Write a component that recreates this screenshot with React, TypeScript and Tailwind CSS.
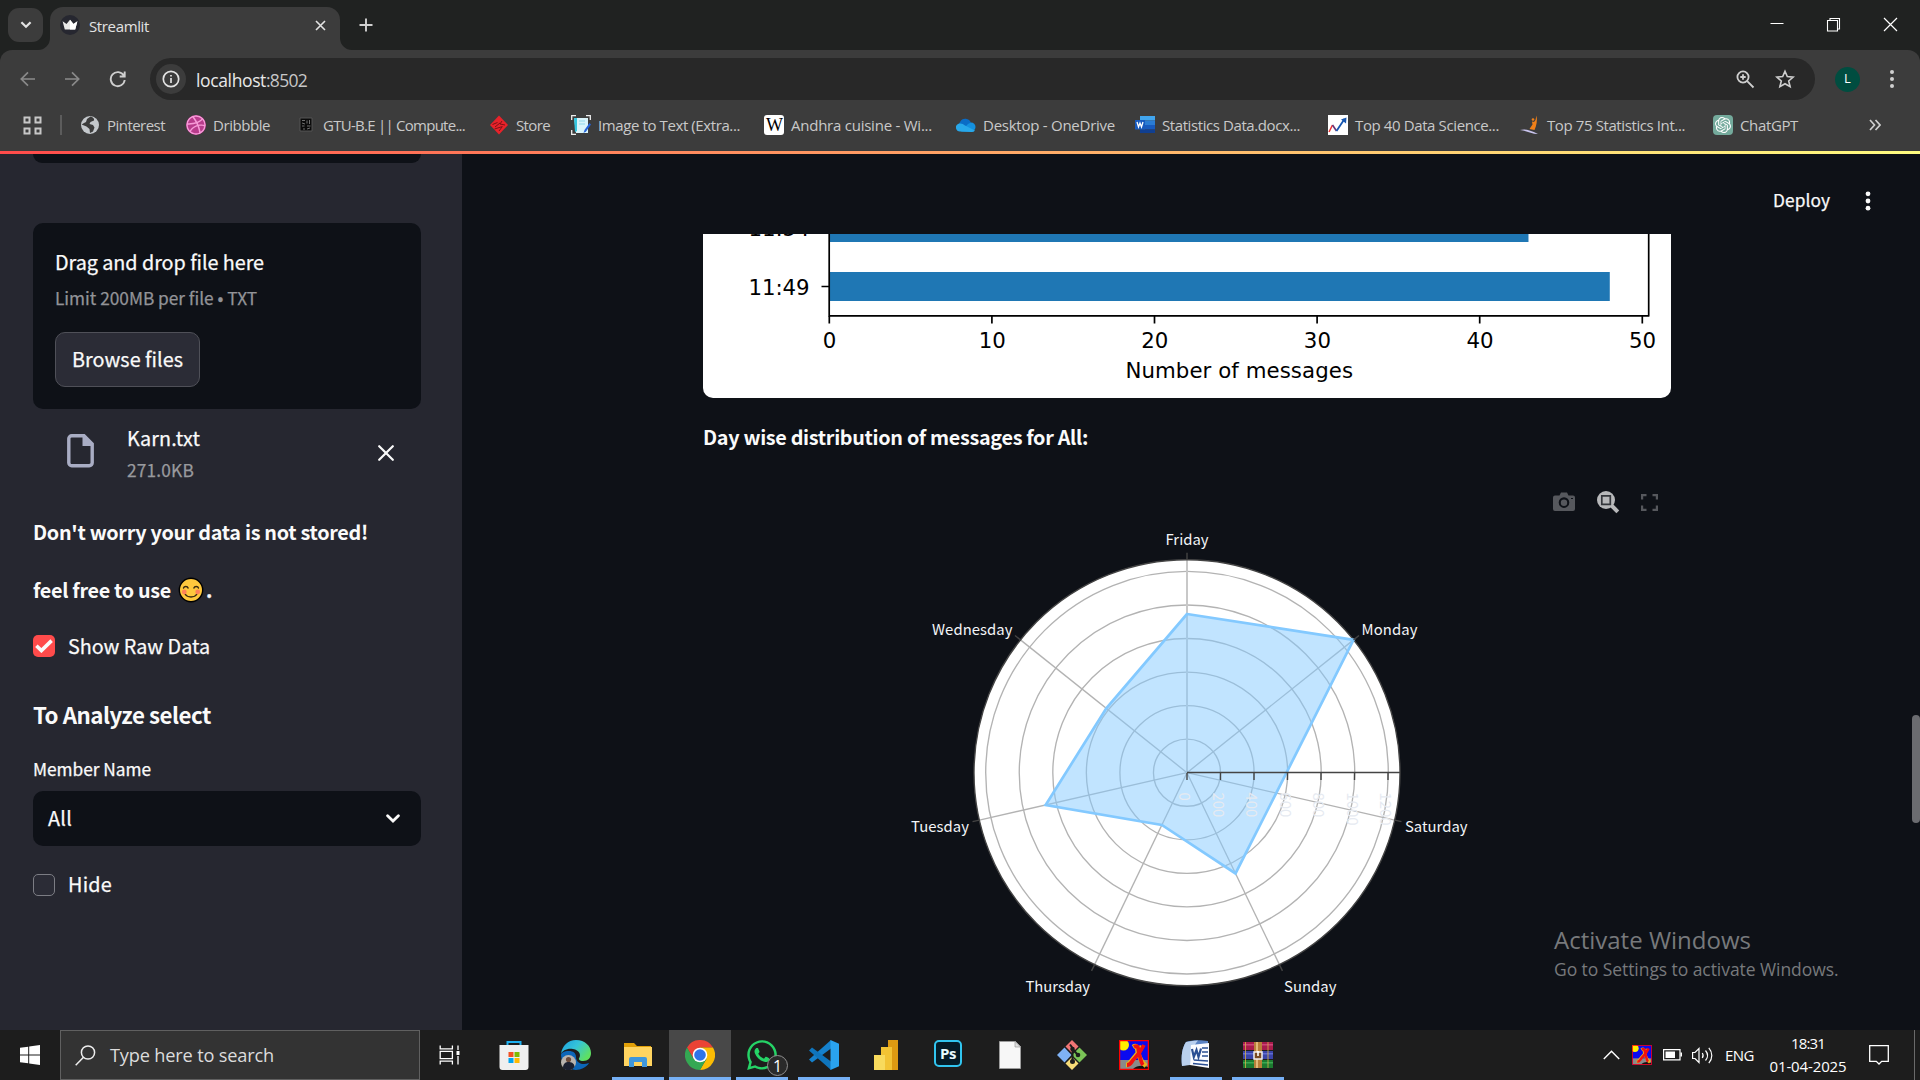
import React, { useLayoutEffect, useRef, useState } from 'react';
import { FaDribbble, FaWhatsapp } from 'react-icons/fa';
import { SiOpenai } from 'react-icons/si';

const UI = "font-['Open_Sans','Noto_Sans',sans-serif]";
const SRC = "font-['Noto_Sans_CJK_JP','Noto_Sans',sans-serif] [-webkit-text-stroke:.25px]";

/** A single line of text, tracked so that it spans exactly `w` pixels. */
function Fit({ w, className = '', children }: { w: number; className?: string; children: string }) {
  const ref = useRef<HTMLSpanElement>(null);
  const [ls, setLs] = useState(0);
  useLayoutEffect(() => {
    const el = ref.current;
    if (!el) return;
    setLs((w - el.getBoundingClientRect().width) / Math.max(1, children.length));
  }, []);
  return (
    <span ref={ref} className={'inline-block whitespace-pre ' + className} style={{ letterSpacing: ls }}>
      {children}
    </span>
  );
}

/* ---------- browser chrome ---------- */

function TabStrip() {
  return (
    <div className="flex h-[50px] items-start bg-[#202221] pl-2">
      <button className="mt-2 flex h-[34px] w-[35px] items-center justify-center rounded-[11px] bg-[#3c3c3c]">
        <svg width="12" height="8" viewBox="0 0 12 8" fill="none" stroke="#e3e3e3" strokeWidth="2.2"><path d="M1.4 1.2 6 5.8l4.600-4.600" /></svg>
      </button>
      <div className="relative mt-[7px] ml-[7px] flex h-[43px] w-[290px] items-center rounded-t-[13px] bg-[#3c3c3c]">
        <svg className="absolute -left-3 bottom-0" width="12" height="12" viewBox="0 0 12 12"><path d="M12 0v12H0A12 12 0 0 0 12 0Z" fill="#3c3c3c" /></svg>
        <svg className="absolute -right-3 bottom-0" width="12" height="12" viewBox="0 0 12 12"><path d="M0 0v12h12A12 12 0 0 1 0 0Z" fill="#3c3c3c" /></svg>
        <svg className="-mt-[7px] ml-[10px]" width="20" height="20" viewBox="0 0 20 20">
          <circle cx="10" cy="10" r="10" fill="#262730" />
          <path d="M2.600 6.200 6.500 9 10 4.800 13.500 9l3.900-2.800-2.200 8.300H4.800Z" fill="#e8e8e8" />
          <path d="M10 4.800 13.500 9l3.900-2.800-2.200 8.300H10Z" fill="#fff" />
        </svg>
        <Fit w={60} className={`${UI} -mt-[6px] ml-[9px] text-[15px] leading-5 text-[#e3e3e3]`}>Streamlit</Fit>
        <svg className="-mt-[7px] mr-[14px] ml-auto" width="11" height="11" viewBox="0 0 11 11" stroke="#e3e3e3" strokeWidth="1.600"><path d="m1 1 9 9M10 1l-9 9" /></svg>
      </div>
      <svg className="mt-[18px] ml-[19px]" width="14" height="14" viewBox="0 0 14 14" stroke="#d0d0d0" strokeWidth="1.900"><path d="M7 .5v13M.5 7h13" /></svg>
      <div className="mt-[17px] ml-auto mr-[22px] flex gap-[42px]">
        <svg width="14" height="14" viewBox="0 0 14 14" stroke="#fff" strokeWidth="1"><path d="M.5 6.500h13" /></svg>
        <svg width="15" height="15" viewBox="0 0 15 15" fill="none" stroke="#fff" strokeWidth="1.100"><path d="M1.500 3.500h10v10.500h-10zM4 3.500v-2h9.500v10.500h-2" /></svg>
        <svg width="15" height="15" viewBox="0 0 15 15" stroke="#fff" strokeWidth="1.200"><path d="m1 1 13 13M14 1 1 14" /></svg>
      </div>
    </div>
  );
}

function AddressBar() {
  return (
    <div className="flex h-[50px] items-center rounded-t-[12px] bg-[#3c3c3c] pt-2 pl-[20px]">
      <svg width="16" height="16" viewBox="0 0 16 16" fill="none" stroke="#8a8a8a" strokeWidth="1.700"><path d="M15 8H1.500M8 1.300 1.300 8 8 14.700" /></svg>
      <svg className="ml-[28px]" width="16" height="16" viewBox="0 0 16 16" fill="none" stroke="#8a8a8a" strokeWidth="1.700"><path d="M1 8h13.500M8 1.300 14.700 8 8 14.700" /></svg>
      <svg className="ml-[29px]" width="18" height="18" viewBox="0 0 18 18" fill="none" stroke="#cfcfcf" strokeWidth="1.900"><path d="M14.800 5.600A7 7 0 1 0 15.700 10M15.700 1.500v5h-5" /></svg>
      <div className="ml-[23px] flex h-[42px] w-[1665px] items-center rounded-full bg-[#282828] pl-[6px]">
        <div className="flex size-[30px] items-center justify-center rounded-full bg-[#3c3c3c]">
          <svg width="18" height="18" viewBox="0 0 18 18" fill="none" stroke="#e3e3e3" strokeWidth="1.700"><circle cx="9" cy="9" r="7.700" /><path d="M9 8v5M9 4.900v1.700" /></svg>
        </div>
        <div className={`${UI} mt-px ml-[10px] flex text-[17.500px] leading-6`}>
          <Fit w={70} className="text-[#e8e8e8]">localhost</Fit>
          <Fit w={41} className="text-[#c7c7c7]">:8502</Fit>
        </div>
        <svg className="ml-auto" width="19" height="19" viewBox="0 0 19 19" fill="none" stroke="#cfcfcf" strokeWidth="1.800"><circle cx="7" cy="7" r="5.600" /><path d="m11.200 11.200 6.300 6.300M7 4.300v5.400M4.300 7h5.400" /></svg>
        <svg className="mr-[20px] ml-[20px]" width="20" height="20" viewBox="0 0 20 20" fill="none" stroke="#cfcfcf" strokeWidth="1.600"><path d="m10 2.200 2.300 5.400 5.900.5-4.500 3.900 1.400 5.700L10 14.700l-5.100 3 1.400-5.700L1.800 8.100l5.900-.5Z" /></svg>
      </div>
      <div className={`${UI} ml-[20px] flex size-[25px] items-center justify-center rounded-full bg-[#004d40] text-[13px] text-white`}>L</div>
      <svg className="ml-[29px]" width="6" height="20" viewBox="0 0 6 20" fill="#cfcfcf"><circle cx="3" cy="3" r="2" /><circle cx="3" cy="10" r="2" /><circle cx="3" cy="17" r="2" /></svg>
    </div>
  );
}

const ChartSite = () => (
  <svg width="20" height="20" viewBox="0 0 20 20"><path fill="#fff" d="M0 0h20v20H0z" /><path d="m1 17 3.500-7" stroke="#e33" strokeWidth="1.600" /><path d="m4.500 10 4 6" stroke="#637" strokeWidth="1.600" /><path d="m8.500 16 8-12" stroke="#1656b0" strokeWidth="1.800" /><path d="m13 4.500 5.500-2-.5 6Z" fill="#1656b0" /></svg>
);

const bookmarks: { label: string; box: string; w: number; icon: React.ReactNode }[] = [
  { label: 'Pinterest', box: 'w-[106px]', w: 58, icon: (
    <svg width="20" height="20" viewBox="0 0 20 20"><circle cx="10" cy="10" r="9" fill="#c4c8cc" /><path d="M10.500 1.500c3 1 4 2 3.500 4l-3.500 1.500-1 2 3.500 1 1.500 2.500-1.500 4-3 1.500-.5-4-3-2.500L1.600 9.500 4 8l2-1 1-3Z" fill="#3c3c3c" /></svg>) },
  { label: 'Dribbble', box: 'w-[110px]', w: 57, icon: <FaDribbble size={20} className="rounded-full bg-[#b83c8c] text-[#f79ad8]" /> },
  { label: 'GTU-B.E || Compute...', box: 'w-[193px]', w: 142, icon: (
    <svg width="20" height="20" viewBox="0 0 20 20"><path d="M4 3h12v13H4z" fill="#0b0b0b" stroke="#555" /><path d="M6 5.500h3M6 8l3 1M6 11h2.500M7 14h2M11 5.500v3M13.500 5v4M11 11h3.500M11 14l3-1" stroke="#707070" strokeWidth="1" /></svg>) },
  { label: 'Store', box: 'w-[82px]', w: 34, icon: (
    <svg width="20" height="20" viewBox="0 0 20 20"><path d="m10 .5 9 9.500-9 9.500L1 10Z" fill="#e8222a" /><path d="m3.500 9.500 5-2M6 12l5-4M5.500 14l8-2.500M10 16l3-4M13 6l-2 3 5 1" stroke="#7d1116" strokeWidth="1" fill="none" /></svg>) },
  { label: 'Image to Text (Extra...', box: 'w-[193px]', w: 142, icon: (
    <svg width="20" height="20" viewBox="0 0 20 20"><path d="M.7 5V.7H5M15 .7h4.300V5M.7 15v4.300H5" stroke="#eee" strokeWidth="1.300" fill="none" /><path d="M3 3h14v15H5z" fill="#d9f4fb" /><path d="M3 3h3v13l-2 1Z" fill="#35c5de" /><path d="M8 6h6M8 9h6" stroke="#8fd9ea" /><path d="m18.500 8-5 7-1 3 2.500-1.500 5-7Z" fill="#2563d8" /></svg>) },
  { label: 'Andhra cuisine - Wi...', box: 'w-[192px]', w: 141, icon: (
    <span className="flex size-5 items-center justify-center rounded-[3px] bg-white font-['Liberation_Serif',serif] text-[18px] leading-5 tracking-[-1px] text-black">W</span>) },
  { label: 'Desktop - OneDrive', box: 'w-[179px]', w: 132, icon: (
    <svg width="20" height="20" viewBox="0 0 20 20"><path d="M5 14a5 5 0 0 1-1-7 6 6 0 0 1 11 1l-3 6Z" fill="#0a6cc6" /><path d="M15 7.500a4.500 4.500 0 0 1 0 9H5L12 9Z" fill="#1490df" /><path d="M4 16.500a4 4 0 0 1-2-7.500c3-1 5 0 7 1.500l10 5a4 4 0 0 1-4 1.500Z" fill="#28a8ea" /></svg>) },
  { label: 'Statistics Data.docx...', box: 'w-[193px]', w: 138, icon: (
    <svg width="20" height="20" viewBox="0 0 20 20"><path d="M5 1h15v4.500H5z" fill="#41a5ee" /><path d="M5 5.500h15V10H5z" fill="#2b7cd3" /><path d="M5 10h15v4.500H5z" fill="#185abd" /><path d="M5 14.500h15V18H5z" fill="#103f91" /><path d="M0 5h10v9.500H0z" fill="#185abd" /><path d="m2 7 1.500 5L5 8l1.500 4L8 7" stroke="#fff" strokeWidth="1.300" fill="none" /></svg>) },
  { label: 'Top 40 Data Science...', box: 'w-[192px]', w: 144, icon: <ChartSite /> },
  { label: 'Top 75 Statistics Int...', box: 'w-[193px]', w: 138, icon: (
    <svg width="20" height="20" viewBox="0 0 20 20"><path d="M16.500.500c1 5 0 10-2 14.500l-5-1 3-4.500L12 6.500l2 .5 1.500-2Z" fill="#f08019" /><circle cx="13" cy="4.500" r="1.300" fill="#f08019" /><path d="M0 15c5-1.500 10 0 18 4-7 0-12-3.500-18-4Z" fill="#c9c4ee" /></svg>) },
  { label: 'ChatGPT', box: 'w-[110px]', w: 58, icon: (
    <span className="flex size-5 items-center justify-center rounded-[4px] bg-[#74aa9c] text-white"><SiOpenai size={16} /></span>) },
];

function BookmarksBar() {
  return (
    <div className="flex h-[51px] items-start bg-[#3c3c3c] pt-[13px] pl-[23px]">
      <svg className="mt-[3px]" width="19" height="19" viewBox="0 0 19 19" fill="none" stroke="#c7c7c7" strokeWidth="2"><path d="M1.500 1.500h5v5h-5zM12.500 1.500h5v5h-5zM1.500 12.500h5v5h-5zM12.500 12.500h5v5h-5z" /></svg>
      <div className="mt-[2px] mr-[18px] ml-[18px] h-5 w-[2px] bg-[#5c5c5c]" />
      {bookmarks.map((b) => (
        <div key={b.label} className={'flex shrink-0 items-center gap-[7px] pt-[2px] ' + b.box}>
          <span className="flex size-5 shrink-0 items-center justify-center">{b.icon}</span>
          <Fit w={b.w} className={`${UI} text-[15px] leading-5 text-[#c9c9c9]`}>{b.label}</Fit>
        </div>
      ))}
      <svg className="mt-[6px] ml-[46px]" width="12" height="12" viewBox="0 0 12 12" fill="none" stroke="#cfcfcf" strokeWidth="1.700"><path d="m1 1 4.500 5L1 11M6.500 1 11 6l-4.500 5" /></svg>
    </div>
  );
}

/* ---------- sidebar ---------- */

function Sidebar() {
  return (
    <aside className={`${SRC} flex w-[462px] shrink-0 flex-col bg-[#262730] pr-[41px] pl-[33px] text-[#fafafa]`}>
      <div className="h-[9px] shrink-0 rounded-b-[10px] bg-[#0e1117]" />
      <div className="mt-[60px] flex h-[186px] shrink-0 flex-col items-start rounded-[10px] bg-[#0e1117] pt-[23px] pl-[22px]">
        <Fit w={209} className="text-[19.8px] leading-8">Drag and drop file here</Fit>
        <Fit w={202} className="mt-[6px] text-[17.3px] leading-7 text-[#929397]">Limit 200MB per file • TXT</Fit>
        <button className="mt-[20px] flex h-[55px] w-[145px] items-center rounded-[10px] border border-[#4f5058] bg-[#2b2c36] pl-[16px]">
          <Fit w={111} className="-mt-[2px] text-[19.8px] leading-8">Browse files</Fit>
        </button>
      </div>
      <div className="flex h-[106px] shrink-0 items-start">
        <svg className="mt-[25px] ml-[34px]" width="27" height="34" viewBox="0 0 27 34"><path d="M5 1.800h12L25.200 10v18.500a3 3 0 0 1-3 3.200H5a3 3 0 0 1-3.200-3.200V5A3 3 0 0 1 5 1.800Z" fill="none" stroke="#a9adc4" strokeWidth="3.400" /><path d="M15.500 1v11H26Z" fill="#a9adc4" /></svg>
        <div className="mt-[14px] ml-[33px] flex flex-col items-start">
          <Fit w={73} className="text-[19.8px] leading-[30px]">Karn.txt</Fit>
          <Fit w={67} className="mt-[5px] text-[17.3px] leading-6 text-[#999a9e]">271.0KB</Fit>
        </div>
        <svg className="mt-[36px] mr-[27px] ml-auto" width="16" height="16" viewBox="0 0 16 16" stroke="#fafafa" strokeWidth="2.200" strokeLinecap="round"><path d="m1.200 1.200 13.600 13.600M14.800 1.200 1.200 14.800" /></svg>
      </div>
      <div className="mt-px"><Fit w={335} className="text-[19.8px] leading-8 font-bold [-webkit-text-stroke:0]">Don't worry your data is not stored!</Fit></div>
      <div className="mt-[26px] flex h-8 items-center">
        <Fit w={138} className="text-[19.8px] leading-8 font-bold [-webkit-text-stroke:0]">feel free to use</Fit>
        <svg className="ml-[7px]" width="26" height="26" viewBox="0 0 26 26">
          <circle cx="13" cy="13" r="11.700" fill="#ffc83d" stroke="#000" strokeWidth="1.400" />
          <path d="M5.500 11c.6-2 4-2 4.600 0M15.900 11c.6-2 4-2 4.600 0M7 17c2.500 4 9.500 4 12 0" fill="none" stroke="#3a2a10" strokeWidth="1.400" strokeLinecap="round" />
          <circle cx="6.300" cy="15" r="2.400" fill="#ff8257" /><circle cx="19.700" cy="15" r="2.400" fill="#ff8257" />
        </svg>
        <span className="ml-[2px] text-[19.8px] leading-8 font-bold">.</span>
      </div>
      <div className="mt-[29px] flex h-[22px] items-center">
        <span className="flex size-[22px] items-center justify-center rounded-[5px] bg-[#ff4b4b]">
          <svg width="18" height="14" viewBox="0 0 18 14" fill="none" stroke="#fafafa" strokeWidth="3.600"><path d="m1.400 6.800 5 4.800L16.600 1.600" /></svg>
        </span>
        <Fit w={142} className="ml-[13px] text-[19.8px] leading-8">Show Raw Data</Fit>
      </div>
      <div className="mt-[40px]"><Fit w={178} className="text-[22.3px] leading-[34px] font-bold [-webkit-text-stroke:0]">To Analyze select</Fit></div>
      <div className="mt-[26px]"><Fit w={118} className="text-[17.3px] leading-6">Member Name</Fit></div>
      <div className="mt-[10px] flex h-[55px] shrink-0 items-center justify-between rounded-[10px] bg-[#0e1117] pr-[21px] pl-[15px]">
        <Fit w={24} className="-mt-px text-[19.8px] leading-8">All</Fit>
        <svg width="14" height="9" viewBox="0 0 14 9" fill="none" stroke="#fafafa" strokeWidth="2.800" strokeLinecap="round"><path d="M1.600 1.700 7 7l5.400-5.300" /></svg>
      </div>
      <div className="mt-[28px] flex h-[22px] items-center">
        <span className="size-[22px] rounded-[5px] border border-[#7c7d84] bg-[#2b2c36]" />
        <Fit w={44} className="-mt-[2px] ml-[13px] text-[19.8px] leading-8">Hide</Fit>
      </div>
    </aside>
  );
}

/* ---------- charts ---------- */

function BusyTimesChart() {
  const x = (v: number) => 829.3 + v * 16.26;
  return (
    <svg className="block rounded-b-[10px] bg-white" width="968" height="164" viewBox="703 234 968 164" fontFamily="'DejaVu Sans', sans-serif" fontSize="21.3">
      <rect x="829" y="226" width={x(43) - 829} height="16" fill="#1f77b4" />
      <rect x="829" y="272" width={x(48) - 829} height="29" fill="#1f77b4" />
      <text x="748.500" y="236" textLength="61">11:54</text>
      <text x="748.500" y="294.500" textLength="61">11:49</text>
      <g stroke="#000" strokeWidth="1.700">
        <path d="M829.200 234v82M1648.700 234v82M828.400 315.800h821M821.500 286.500h7.500" fill="none" />
        {[0, 10, 20, 30, 40, 50].map((v) => <path key={v} d={`M${x(v)} 316v7.500`} />)}
      </g>
      {[0, 10, 20, 30, 40, 50].map((v) => <text key={v} x={x(v) + 0.3} y="347.700" textAnchor="middle">{v}</text>)}
      <text x="1125.500" y="377.700" textLength="227.500">Number of messages</text>
    </svg>
  );
}

const days: { name: string; r: number; x: number; y: number; w: number }[] = [
  { name: 'Friday', r: 158.7, x: 1165.500, y: 544.700, w: 43 },
  { name: 'Monday', r: 213, x: 1361.500, y: 634.800, w: 56 },
  { name: 'Saturday', r: 91.500, x: 1405, y: 831.800, w: 62.500 },
  { name: 'Sunday', r: 111.800, x: 1284, y: 991.800, w: 52.500 },
  { name: 'Thursday', r: 58, x: 1025.500, y: 991.800, w: 64.500 },
  { name: 'Tuesday', r: 145, x: 911, y: 831.800, w: 58 },
  { name: 'Wednesday', r: 103.200, x: 932, y: 634.800, w: 80.500 },
];

function DayRadarChart() {
  const cx = 1187, cy = 772.7, R = 213;
  const at = (i: number, r: number) => {
    const a = (90 - (i * 360) / 7) * (Math.PI / 180);
    return [cx + r * Math.cos(a), cy - r * Math.sin(a)];
  };
  const seg = (i: number, r0: number, r1: number) => `M${at(i, r0).join(' ')}L${at(i, r1).join(' ')}`;
  return (
    <svg className="block" width="968" height="500" viewBox="703 520 968 500" fontFamily="'Noto Sans CJK JP', 'Noto Sans', sans-serif" fontSize="14.850">
      <circle cx={cx} cy={cy} r={R} fill="#fff" />
      <g fill="none" stroke="#b3b3b3" strokeWidth="1.350">
        {[1, 2, 3, 4, 5, 6].map((k) => <circle key={k} cx={cx} cy={cy} r={k * 33.550} />)}
        {days.map((d, i) => <path key={d.name} d={seg(i, 0, R)} stroke={i === 0 ? '#c8c8c8' : '#b3b3b3'} strokeWidth={i === 0 ? 2 : 1.350} />)}
      </g>
      <circle cx={cx} cy={cy} r={R} fill="none" stroke="#444" strokeWidth="1.375" />
      <polygon points={days.map((d, i) => at(i, d.r).join(',')).join(' ')} fill="#83c9ff" fillOpacity=".5" stroke="#83c9ff" strokeWidth="2.700" />
      <g stroke="#444" strokeWidth="1.400">
        {days.map((d, i) => <path key={d.name} d={seg(i, R, R + 7)} />)}
        <path d={`M${cx} 772.500h${R}`} />
        {[0, 1, 2, 3, 4, 5, 6].map((k) => <path key={k} d={`M${cx + k * 33.5} 773v7`} />)}
      </g>
      {days.map((d) => <text key={d.name} x={d.x} y={d.y} textLength={d.w} fill="#f3f5f8">{d.name}</text>)}
      {[0, 1, 2, 3, 4, 5, 6].map((k) => (
        <text key={k} transform={`translate(${cx - 8 + k * 33.5} 792.500) rotate(90)`} fill="#e6eaf1">{k * 200}</text>
      ))}
    </svg>
  );
}

function Main() {
  return (
    <main className={`${SRC} relative flex-1 bg-[#0e1117] text-[#fafafa]`}>
      <div className="flex h-20 items-start justify-end pt-[32px] pr-[49px]">
        <Fit w={57} className="text-[17.3px] leading-7">Deploy</Fit>
        <svg className="mt-[5px] ml-[35px]" width="6" height="20" viewBox="0 0 6 20" fill="#fafafa"><circle cx="3" cy="2.800" r="2.400" /><circle cx="3" cy="10" r="2.400" /><circle cx="3" cy="17.200" r="2.400" /></svg>
      </div>
      <div className="ml-[241px] w-[968px]">
        <BusyTimesChart />
        <div className="mt-[23px] h-8"><Fit w={385} className="text-[19.8px] leading-8 font-bold [-webkit-text-stroke:0]">Day wise distribution of messages for All:</Fit></div>
        <div className="flex h-[67px] items-start justify-end pt-[39px] pr-[13px]">
          <svg width="22" height="19" viewBox="0 0 22 19"><path fillRule="evenodd" d="M2 3.500h4.500L8 .5h6l1.500 3H20a2 2 0 0 1 2 2V17a2 2 0 0 1-2 2H2a2 2 0 0 1-2-2V5.500a2 2 0 0 1 2-2ZM11 5.300a5.300 5.300 0 1 0 0 10.600 5.300 5.300 0 0 0 0-10.600Zm0 2.200a3.200 3.200 0 1 1 0 6.400 3.200 3.200 0 0 1 0-6.400Z" fill="#56585d" /><path d="M18 6h2v1h-2z" fill="#0e1117" /></svg>
          <svg className="-mt-[1px] ml-[22px]" width="23" height="23" viewBox="0 0 23 23"><circle cx="9" cy="9" r="9" fill="#b7b8ba" /><path d="m14 14 6.800 6.800" stroke="#b7b8ba" strokeWidth="4" /><path d="M4.800 4.800h8.500v8.500H4.800z" fill="none" stroke="#33363b" strokeWidth="1.700" /></svg>
          <svg className="mt-[2px] ml-[21px]" width="17" height="17" viewBox="0 0 17 17" fill="none" stroke="#56585d" strokeWidth="2.200"><path d="M1.100 5.500V1.100h4.400M11.500 1.100h4.400v4.400M15.900 11.500v4.400h-4.400M5.500 15.900H1.100v-4.400" /></svg>
        </div>
        <DayRadarChart />
      </div>
      <div className={`${UI} absolute top-[768px] left-[1092px] flex flex-col items-start text-[#77797c] [-webkit-text-stroke:0]`}>
        <Fit w={197} className="text-[24px] leading-9">Activate Windows</Fit>
        <Fit w={284.5} className="-mt-[1px] text-[17.500px] leading-6">Go to Settings to activate Windows.</Fit>
      </div>
      <div className="absolute top-[561px] right-0 h-[108px] w-2 rounded-[4px] bg-[#6b6c70]" />
    </main>
  );
}

/* ---------- taskbar ---------- */

const RunnerIcon = ({ size }: { size: number }) => (
  <svg width={size} height={size} viewBox="0 0 30 30">
    <path d="M0 0h30v30H0z" fill="#0a0af0" /><path d="M1 20h28v9H1z" fill="#8a8a8a" /><circle cx="4.500" cy="5" r="5.500" fill="#ffee00" />
    <path d="M14 29c4-4 10-4 15-2v2Z" fill="#111" />
    <path d="M14 7c5-3 4 3 5 6s4 10 8 13M23 6c-3 7-6 10-9 13s-3 6-7 6" fill="none" stroke="#e8b21a" strokeWidth="4.600" />
    <path d="M15 7c5-3 4 3 5 6s2 10 4 12M25 5c-4 8-7 11-10 14s-3 6-7 6" fill="none" stroke="#f01010" strokeWidth="3.800" />
    <path d="M.6.600h28.800v28.800H.6z" fill="none" stroke="#ff0000" strokeWidth="1.300" />
  </svg>
);

const tasks: { id: string; open?: boolean; active?: boolean; icon: React.ReactNode }[] = [
  { id: 'store', icon: (
    <svg width="30" height="30" viewBox="0 0 30 30"><path d="M8.500 6V2h13v4" fill="none" stroke="#1fb0f0" strokeWidth="2" /><path d="M.5 5h29v22a3 3 0 0 1-3 3h-23a3 3 0 0 1-3-3Z" fill="#efefef" /><path d="M9.500 12h5v5h-5z" fill="#f25022" /><path d="M15.500 12h5v5h-5z" fill="#7fba00" /><path d="M9.500 18h5v5h-5z" fill="#00a4ef" /><path d="M15.500 18h5v5h-5z" fill="#ffb900" /></svg>) },
  { id: 'edge', icon: (
    <svg width="30" height="30" viewBox="0 0 30 30">
      <defs><linearGradient id="eg" x1="0" x2="1" y1="0" y2=".6"><stop offset="0" stopColor="#1a9fe0" /><stop offset=".5" stopColor="#35c4d9" /><stop offset="1" stopColor="#5fe060" /></linearGradient></defs>
      <path d="M0 15a15 15 0 0 0 22 13.200c3-1.400 5-3.200 6-5.200-8 3-13-1-13-6 0-4-3-6-7-6-5 0-8 2-8 4Z" fill="#0c66b8" />
      <path d="M0 14C1 6 7 0 15 0c9 0 15 6 15 13 0 5-3 8-8 8-3 0-5-1.500-3.800-3 2-3 .3-8-6.200-9C6 8 1 11 0 14Z" fill="url(#eg)" />
      <circle cx="7.500" cy="22.500" r="7.500" fill="#b9b3ae" /><path d="M2 28c0-5 3-6 5.500-6s6 1 6 5a7.500 7.500 0 0 1-11.500 1Z" fill="#1c2030" /><circle cx="7.500" cy="19.500" r="2.600" fill="#6b4a3a" />
    </svg>) },
  { id: 'explorer', open: true, icon: (
    <svg width="30" height="30" viewBox="0 0 30 30"><path d="M1 3h10l3 3h14v6H1z" fill="#e2a008" /><path d="M1 7h28v19H1z" fill="#ffd460" /><path d="M6 27v-8a2 2 0 0 1 2-2h14a2 2 0 0 1 2 2v8h-5v-5h-8v5Z" fill="#3f97dc" /></svg>) },
  { id: 'chrome', open: true, active: true, icon: (
    <svg width="30" height="30" viewBox="0 0 30 30"><path d="M2 7.500A15 15 0 0 1 28 7.500H15L8.500 18.700Z" fill="#ea4335" /><path d="M28 7.500A15 15 0 0 1 15 30L21.500 18.700 15 7.500Z" fill="#fbbc04" /><path d="M2 7.500A15 15 0 0 0 15 30l6.500-11.300h-13Z" fill="#34a853" /><circle cx="15" cy="15" r="7.300" fill="#fff" /><circle cx="15" cy="15" r="5.800" fill="#2f73e8" /></svg>) },
  { id: 'whatsapp', open: true, icon: (
    <span className="relative"><FaWhatsapp size={34} color="#25d366" /><span className={`${UI} absolute -right-[9px] -bottom-[4px] flex size-[21px] items-center justify-center rounded-full border border-[#8f8f8f] bg-[#2a2a2a] text-[16px] text-white`}>1</span></span>) },
  { id: 'vscode', open: true, icon: (
    <svg width="30" height="30" viewBox="0 0 30 30"><path d="M22 0 0 19.500l3 3L22 8.500Z" fill="#1581cc" /><path d="M22 30 0 10.500l3-3L22 21.500Z" fill="#0f75bd" /><path d="m21.500 0 8.500 3.800v22.400L21.500 30Z" fill="#2aa3ef" /></svg>) },
  { id: 'powerbi', icon: (
    <svg width="24" height="30" viewBox="0 0 24 30"><path d="M14 0h10v30H14z" fill="#dd9a12" /><path d="M7 7h11v23H7z" fill="#f2c334" /><path d="M0 15h11v15H0z" fill="#f8da5c" /></svg>) },
  { id: 'photoshop', icon: (
    <span className={`${UI} -mt-[3px] flex h-[27px] w-[28px] items-center justify-center rounded-[5px] border-2 border-[#31c5f0] bg-[#051c28] text-[15px] font-bold tracking-[-.5px] text-[#e8fbff]`}>Ps</span>) },
  { id: 'document', icon: (
    <svg width="22" height="28" viewBox="0 0 22 28"><path d="M.5.500h16l5 5v22H.5z" fill="#f7f7f7" stroke="#9c9c9c" /><path d="M16 .500v5.500h5.500Z" fill="#ddd" stroke="#999" strokeWidth=".7" /></svg>) },
  { id: 'git', icon: (
    <svg width="30" height="30" viewBox="0 0 30 30"><path d="m15 0 6.500 6.500L15 13 8.500 6.500Z" fill="#f17575" /><path d="m7.500 7.500 7 7.500-7 7.500L0 15Z" fill="#7fb2f5" /><path d="m22.500 7.500 7.500 7.500-7.500 7.500-7.500-7.500Z" fill="#7bc457" /><path d="m15 17 6.500 6.500L15 30l-6.500-6.500Z" fill="#f7dc78" /><path d="M13 4.500 15.500 8v15M15.500 9l5 5.500" stroke="#1c1c1c" strokeWidth="2" fill="none" /><circle cx="15.500" cy="9" r="2.300" fill="#1c1c1c" /><circle cx="21" cy="15" r="2.300" fill="#1c1c1c" /><circle cx="15.500" cy="21.500" r="2.500" fill="#1c1c1c" /></svg>) },
  { id: 'runner', icon: <RunnerIcon size={30} /> },
  { id: 'word', open: true, icon: (
    <svg width="30" height="30" viewBox="0 0 30 30"><path d="M5 2C10 0 20 0 27 1v22c-9-1-16 1-26 3C0 16 1 8 5 2Z" fill="#5b83c4" /><path d="M5 2c4-1 8-1.500 12-1.500C12 6 9 15 9 25l-8 1C0 16 1 8 5 2Z" fill="#b9d0ee" /><path d="m10 5 18-2v25l-19-3Z" fill="#fbfcff" /><path d="m11 9 1.800 8 2.700-7 2 7L20 8.500" fill="none" stroke="#2b4f93" strokeWidth="2.200" /><path d="M21 8h6M21 12h6M21 16h6M13 20l14 1M12 23.500l15 1.500" stroke="#2b4f93" strokeWidth="1.500" /></svg>) },
  { id: 'winrar', open: true, icon: (
    <svg width="30" height="26" viewBox="0 0 30 26"><path d="M0 0h30v8H0z" fill="#a81c4c" /><path d="M0 2h30v1.500H0z" fill="#cc4478" /><path d="M0 9h30v8H0z" fill="#3a44a8" /><path d="M0 11h30v1.500H0z" fill="#5f6cd0" /><path d="M0 18h30v8H0z" fill="#1c7a30" /><path d="M0 20h30v1.500H0z" fill="#3aa850" /><path d="M2.500 0v26M25 0v26" stroke="#d8b048" strokeWidth=".8" /><path d="M11 0h8v26h-8z" fill="#b8803a" /><path d="M13 0h2v26h-2z" fill="#e2b878" /><path d="M11 10h8v7h-8z" fill="#7a4a20" stroke="#eee" strokeWidth="1.500" /><path d="M15 9v5" stroke="#fff" strokeWidth="1.600" /></svg>) },
];

function Taskbar() {
  return (
    <footer className={`${UI} flex h-[50px] bg-[#1d1d1d] text-white`}>
      <div className="flex w-[60px] items-center justify-center">
        <svg width="20" height="20" viewBox="0 0 20 20" fill="#fff"><path d="M0 2.800 8.200 1.700v7.800H0zM9.200 1.500 20 0v9.500H9.200zM0 10.500h8.200v7.800L0 17.200zM9.200 10.500H20V20L9.200 18.500z" /></svg>
      </div>
      <div className="flex w-[360px] items-center border border-[#606060] bg-[#333] pl-[14px]">
        <svg width="21" height="21" viewBox="0 0 21 21" fill="none" stroke="#eee" strokeWidth="1.500"><circle cx="13" cy="7.500" r="6.600" /><path d="M8.500 12.300.7 20.200" /></svg>
        <Fit w={164} className="-mt-[1px] ml-[14px] text-[18.200px] leading-7 text-[#dcdcdc]">Type here to search</Fit>
      </div>
      <div className="flex w-[63px] items-center pl-[19px]">
        <svg width="22" height="20" viewBox="0 0 22 20" fill="none" stroke="#fff" strokeWidth="1.300"><path d="M1.200.5v3.300h12.200V.500M1.200 6.300h12.200v7.400H1.200zM1.200 19.500v-3.300h12.200v3.300M19 .500v4.500M19 11v8.500" /><path d="M19 6v4" strokeWidth="3" /></svg>
      </div>
      {tasks.map((t) => (
        <div key={t.id} className={'relative flex w-[62px] items-center justify-center ' + (t.active ? 'bg-[#484848]' : '')}>
          {t.icon}
          {t.open && <div className={'absolute bottom-0 h-[3px] bg-[#76b0f5] ' + (t.active ? 'inset-x-0' : 'inset-x-[5px]')} />}
        </div>
      ))}
      <div className="ml-auto flex items-center">
        <svg width="17" height="10" viewBox="0 0 17 10" fill="none" stroke="#fff" strokeWidth="1.400"><path d="M.8 9 8.500 1.200 16.200 9" /></svg>
        <span className="ml-[12px]"><RunnerIcon size={20} /></span>
        <svg className="ml-[11px]" width="19" height="12" viewBox="0 0 19 12"><path d="M.6.600h16.400v10.300H.6z" fill="none" stroke="#fff" strokeWidth="1.200" /><path d="M2.500 2.500h9.500v6.500H2.500z" fill="#fff" /><path d="M17.500 3.500h1.500v4h-1.500z" fill="#fff" /></svg>
        <svg className="ml-[10px]" width="21" height="19" viewBox="0 0 21 19" fill="none" stroke="#fff" strokeWidth="1.200"><path d="M.6 6.500H3l4-4v14l-4-4H.6zM10.300 7c1 1.500 1 3.500 0 5M13.500 4.500c2.500 3 2.500 7 0 10M16.800 1.800c4 4.500 4 11 0 15.400" /></svg>
        <Fit w={29} className="ml-[12px] text-[15px]">ENG</Fit>
        <div className="ml-[15px] flex w-[78px] flex-col items-center text-[15px] leading-[23px]">
          <Fit w={34}>18:31</Fit>
          <Fit w={77}>01-04-2025</Fit>
        </div>
        <svg className="ml-[22px]" width="20" height="20" viewBox="0 0 20 20" fill="none" stroke="#fff" strokeWidth="1.300"><path d="M.7.700h18.600v15.600h-6.600L10 19l-2.700-2.700H.7z" /></svg>
        <div className="mr-[5px] ml-[25px] h-[50px] w-px bg-[#6a6a6a]" />
      </div>
    </footer>
  );
}

export default function App() {
  return (
    <div className="flex h-[1080px] w-[1920px] flex-col overflow-hidden bg-[#202221]">
      <TabStrip />
      <AddressBar />
      <BookmarksBar />
      <div className="h-[3px] shrink-0 bg-linear-to-r/srgb from-[#ff4b4b] to-[#fffd80]" />
      <div className="flex h-[876px] shrink-0 overflow-hidden">
        <Sidebar />
        <Main />
      </div>
      <Taskbar />
    </div>
  );
}
